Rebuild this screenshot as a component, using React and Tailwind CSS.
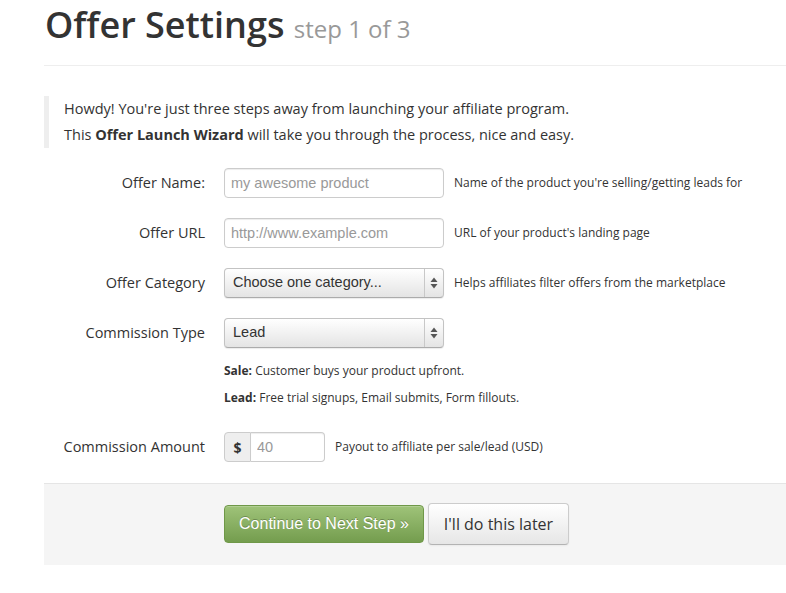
import React, { useState } from 'react'

const sans = "font-['Open_Sans',sans-serif]"
const helv = "font-['Liberation_Sans',Arial,sans-serif]"

function Arrows() {
  return (
    <svg width="8" height="12" viewBox="0 0 8 12" className="block">
      <path d="M4 0.5 L7.5 5 L0.5 5 Z" fill="#555" />
      <path d="M4 11.5 L7.5 7 L0.5 7 Z" fill="#555" />
    </svg>
  )
}

function Select({ value, options, onChange }) {
  return (
    <div className="relative w-[220px] h-[30px]">
      <select
        value={value}
        onChange={(e) => onChange(e.target.value)}
        className={`${helv} appearance-none w-full h-full rounded-[4px] border border-[#c3c3c3] border-b-[#ababab] bg-gradient-to-b from-white to-[#e4e4e4] pl-[8px] pr-[26px] text-[14.5px] text-[#333] shadow-[0_1px_1px_rgba(0,0,0,0.08)] outline-none`}
      >
        {options.map((o) => (
          <option key={o}>{o}</option>
        ))}
      </select>
      <span className="pointer-events-none absolute right-[1px] top-[1px] bottom-[1px] w-[19px] border-l border-[#c8c8c8] flex items-center justify-center">
        <Arrows />
      </span>
    </div>
  )
}

function Row({ label, children, help }) {
  return (
    <div className="flex items-center h-[30px]">
      <label className="w-[161px] text-right text-[14.5px] text-[#333]">{label}</label>
      <div className="ml-[19px] flex items-center">
        {children}
        {help && <span className="ml-[10px] text-[12px] text-[#333]">{help}</span>}
      </div>
    </div>
  )
}

export default function App() {
  const [name, setName] = useState('')
  const [url, setUrl] = useState('')
  const [category, setCategory] = useState('Choose one category...')
  const [type, setType] = useState('Lead')
  const [amount, setAmount] = useState('')

  const inputCls = `${helv} w-[220px] h-[30px] rounded-[4px] border border-[#ccc] px-[6px] text-[14.5px] text-[#555] placeholder:text-[#999] shadow-[inset_0_1px_1px_rgba(0,0,0,0.075)] outline-none`

  return (
    <div className={`${sans} min-h-screen bg-white text-[#333] pl-[44px] pb-[28px]`}>
      <div className="pt-[5px] pb-[20px] border-b border-[#eee]">
        <h1 className="h-[40px] text-[36px] leading-[40px] font-semibold text-[#333] pl-[1px] whitespace-nowrap">
          Offer Settings <span className="text-[24px] leading-none font-normal text-[#999]">step 1 of 3</span>
        </h1>
      </div>

      <blockquote className="mt-[30px] border-l-[5px] border-[#eee] pl-[15px] text-[14.5px] leading-[26px]">
        <p>Howdy! You're just three steps away from launching your affiliate program.</p>
        <p>
          This <strong className="font-bold">Offer Launch Wizard</strong> will take you through the process, nice and easy.
        </p>
      </blockquote>

      <form className="mt-[20px] flex flex-col" onSubmit={(e) => e.preventDefault()}>
        <div className="flex flex-col gap-[20px]">
          <Row label="Offer Name:" help="Name of the product you're selling/getting leads for">
            <input className={inputCls} placeholder="my awesome product" value={name} onChange={(e) => setName(e.target.value)} />
          </Row>
          <Row label="Offer URL" help="URL of your product's landing page">
            <input className={inputCls} placeholder="http://www.example.com" value={url} onChange={(e) => setUrl(e.target.value)} />
          </Row>
          <Row label="Offer Category" help="Helps affiliates filter offers from the marketplace">
            <Select value={category} onChange={setCategory} options={['Choose one category...', 'Software', 'Health', 'Education']} />
          </Row>
          <Row label="Commission Type">
            <Select value={type} onChange={setType} options={['Lead', 'Sale']} />
          </Row>
        </div>

        <div className="ml-[180px] mt-[14px] text-[12px] leading-[18px] text-[#333] flex flex-col gap-[9px]">
          <p><strong className="font-bold">Sale:</strong> Customer buys your product upfront.</p>
          <p><strong className="font-bold">Lead:</strong> Free trial signups, Email submits, Form fillouts.</p>
        </div>

        <div className="mt-[25px]">
          <Row label="Commission Amount" help="Payout to affiliate per sale/lead (USD)">
            <div className="flex h-[30px]">
              <span className="w-[27px] h-full flex items-center justify-center bg-[#eee] border border-[#ccc] rounded-l-[4px] text-[14px] font-bold text-[#333]">$</span>
              <input
                className={`${helv} w-[74px] h-full border border-l-0 border-[#ccc] rounded-r-[4px] px-[6px] text-[14.5px] text-[#555] placeholder:text-[#999] shadow-[inset_0_1px_1px_rgba(0,0,0,0.075)] outline-none`}
                placeholder="40"
                value={amount}
                onChange={(e) => setAmount(e.target.value)}
              />
            </div>
          </Row>
        </div>

        <div className="mt-[21px] bg-[#f5f5f5] border-t border-[#e5e5e5] pt-[19px] pb-[20px] pl-[180px] flex items-center gap-[4px]">
          <button
            type="submit"
            className={`${helv} w-[200px] h-[38px] rounded-[4px] border border-[#6f9848] bg-gradient-to-b from-[#9fc379] to-[#749d4e] text-[16px] text-white [text-shadow:0_-1px_0_rgba(0,0,0,0.25)] shadow-[inset_0_1px_0_rgba(255,255,255,0.2)]`}
          >
            Continue to Next Step »
          </button>
          <button
            type="button"
            className="w-[141px] h-[42px] rounded-[4px] border border-[#ccc] border-b-[#b3b3b3] bg-gradient-to-b from-white to-[#e6e6e6] text-[16px] text-[#333] shadow-[0_1px_2px_rgba(0,0,0,0.05)]"
          >
            I'll do this later
          </button>
        </div>
      </form>
    </div>
  )
}
